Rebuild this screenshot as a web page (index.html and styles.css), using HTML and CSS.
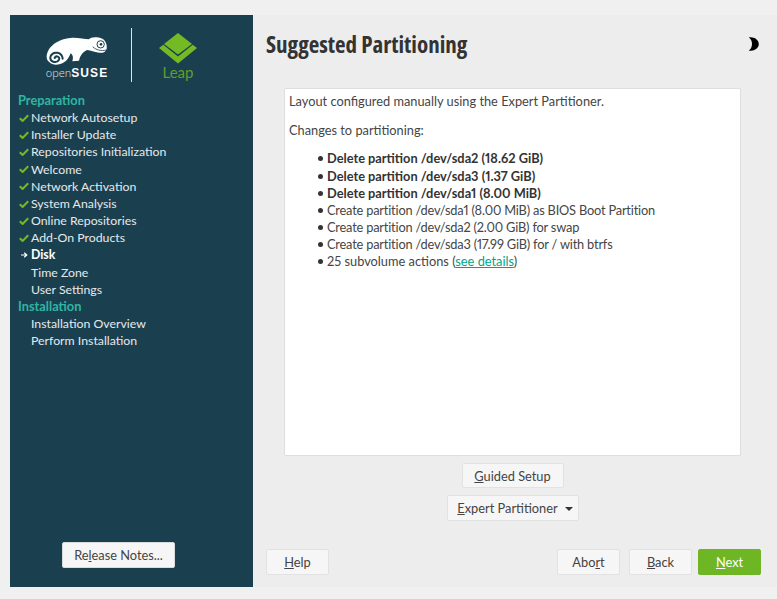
FILE: index.html
```html
<!DOCTYPE html>
<html lang="en">
<head>
<meta charset="utf-8">
<title>Suggested Partitioning</title>
<link rel="stylesheet" href="styles.css">
</head>
<body>
<div class="app">
  <aside class="sidebar">
    <div class="logos">
      <div class="brand">
        <svg class="geeko" viewBox="33 40 195 99" aria-hidden="true">
          <path fill="#fff" d="M38 110C38 80 70 55 110 52C130 50 150 56 165 56C170 48 190 48 205 54C215 60 220 72 218 84C216 94 205 98 195 96C180 94 170 90 160 88C150 92 140 100 135 120L115 122C118 112 118 104 110 98C105 110 100 120 90 125C80 132 60 135 50 128C42 122 38 118 38 110Z"/>
          <path fill="none" stroke="#1a4050" stroke-width="6" stroke-linecap="round" d="M86 114C84 94 58 90 50 106C44 124 68 130 75 117C79 108 66 103 62 112"/>
          <circle cx="200" cy="71" r="11" fill="none" stroke="#1a4050" stroke-width="3"/>
          <circle cx="201" cy="71" r="4" fill="#1a4050"/>
          <path fill="none" stroke="#1a4050" stroke-width="2.5" d="M176 78C186 88 202 92 216 88"/>
        </svg>
        <div class="wordmark"><span class="wm-open">open</span><span class="wm-suse">SUSE</span></div>
      </div>
      <div class="logo-rule"></div>
      <div class="brand brand-leap">
        <svg class="leap" viewBox="0 0 38 32" aria-hidden="true">
          <path fill="#73ba25" d="M19 0L33 11L19 21.500L5 11Z"/>
          <path fill="#73ba25" d="M0 15L4.300 11.700L19 23.500L33.700 11.700L38 15L19 30.500Z"/>
        </svg>
        <div class="leap-name">Leap</div>
      </div>
    </div>
    <div class="steps">
      <div class="section">Preparation</div>
      <div class="step"><span class="mark"><svg viewBox="0 0 10 8"><path d="M.8 4.200L3.600 7L9.200 1.200" fill="none" stroke="#73ba25" stroke-width="2"/></svg></span>Network Autosetup</div>
      <div class="step"><span class="mark"><svg viewBox="0 0 10 8"><path d="M.8 4.200L3.600 7L9.200 1.200" fill="none" stroke="#73ba25" stroke-width="2"/></svg></span>Installer Update</div>
      <div class="step"><span class="mark"><svg viewBox="0 0 10 8"><path d="M.8 4.200L3.600 7L9.200 1.200" fill="none" stroke="#73ba25" stroke-width="2"/></svg></span>Repositories Initialization</div>
      <div class="step"><span class="mark"><svg viewBox="0 0 10 8"><path d="M.8 4.200L3.600 7L9.200 1.200" fill="none" stroke="#73ba25" stroke-width="2"/></svg></span>Welcome</div>
      <div class="step"><span class="mark"><svg viewBox="0 0 10 8"><path d="M.8 4.200L3.600 7L9.200 1.200" fill="none" stroke="#73ba25" stroke-width="2"/></svg></span>Network Activation</div>
      <div class="step"><span class="mark"><svg viewBox="0 0 10 8"><path d="M.8 4.200L3.600 7L9.200 1.200" fill="none" stroke="#73ba25" stroke-width="2"/></svg></span>System Analysis</div>
      <div class="step"><span class="mark"><svg viewBox="0 0 10 8"><path d="M.8 4.200L3.600 7L9.200 1.200" fill="none" stroke="#73ba25" stroke-width="2"/></svg></span>Online Repositories</div>
      <div class="step"><span class="mark"><svg viewBox="0 0 10 8"><path d="M.8 4.200L3.600 7L9.200 1.200" fill="none" stroke="#73ba25" stroke-width="2"/></svg></span>Add-On Products</div>
      <div class="step current"><span class="mark"><svg viewBox="0 0 10 8"><path d="M2 4H7M5.200 1.800L7.800 4L5.200 6.200" fill="none" stroke="#fff" stroke-width="1.200"/></svg></span>Disk</div>
      <div class="step"><span class="mark"></span>Time Zone</div>
      <div class="step"><span class="mark"></span>User Settings</div>
      <div class="section">Installation</div>
      <div class="step"><span class="mark"></span>Installation Overview</div>
      <div class="step"><span class="mark"></span>Perform Installation</div>
    </div>
    <div class="sidebar-foot"><button class="btn btn-notes">Re<u>l</u>ease Notes...</button></div>
  </aside>
  <main class="main">
    <header class="head">
      <h1>Suggested Partitioning</h1>
      <svg class="moon" viewBox="0 0 11 14" aria-hidden="true"><path fill="#000" d="M.8 .3C6 -.5 10.800 2.500 10.800 7C10.800 11.500 6 14.500 .8 13.500C3 12 4 9.500 4 7C4 4.500 3 2 .8 .3Z"/></svg>
    </header>
    <section class="summary">
      <p>Layout configured manually using the Expert Partitioner.</p>
      <p>Changes to partitioning:</p>
      <ul>
        <li><b>Delete partition /dev/sda2 (18.62 GiB)</b></li>
        <li><b>Delete partition /dev/sda3 (1.37 GiB)</b></li>
        <li><b>Delete partition /dev/sda1 (8.00 MiB)</b></li>
        <li class="create">Create partition /dev/sda1 (8.00 MiB) as BIOS Boot Partition</li>
        <li class="create">Create partition /dev/sda2 (2.00 GiB) for swap</li>
        <li class="create">Create partition /dev/sda3 (17.99 GiB) for / with btrfs</li>
        <li>25 subvolume actions (<a href="#">see details</a>)</li>
      </ul>
    </section>
    <div class="actions">
      <button class="btn btn-guided"><u>G</u>uided Setup</button>
      <button class="btn btn-expert"><u>E</u>xpert Partitioner<span class="caret"></span></button>
    </div>
    <footer class="foot">
      <button class="btn btn-nav"><u>H</u>elp</button>
      <div class="spacer"></div>
      <button class="btn btn-nav">Abo<u>r</u>t</button>
      <button class="btn btn-nav btn-back"><u>B</u>ack</button>
      <button class="btn btn-nav btn-next"><u>N</u>ext</button>
    </footer>
  </main>
</div>
</body>
</html>
```
FILE: styles.css
```css
* { box-sizing: border-box; }
html, body { margin: 0; height: 100%; }
body {
  background: #f0f0f0;
  font-family: Lato, "Open Sans", sans-serif;
  font-size: 12.800px;
  font-variant-numeric: proportional-nums;
  color: #454545;
  overflow: hidden;
}
.app { display: flex; height: 572px; margin: 15px 0 0 10px; }
.sidebar {
  width: 243px;
  background: #1a4050;
  display: flex;
  flex-direction: column;
  color: #e6e9eb;
}
.logos { display: flex; height: 77px; padding: 13px 0 0 35px; }
.brand { width: 64px; display: flex; flex-direction: column; align-items: center; }
.geeko { width: 65px; height: 33px; margin-top: 5.500px; flex: none; }
.wordmark { color: #fff; font-family: "Open Sans", sans-serif; font-size: 11px; line-height: 12px; white-space: nowrap; margin-top: .500px; }
.wm-open { font-weight: 300; opacity: .85; }
.wm-suse { font-family: "Liberation Sans", sans-serif; font-weight: 700; font-size: 12px; letter-spacing: 1.100px; }
.logo-rule { width: 1px; height: 54px; background: #dfe4e6; margin-left: 22px; }
.brand-leap { width: 38px; margin-left: 27px; }
.leap { width: 38px; height: 32px; margin-top: 5px; flex: none; }
.leap-name { color: #5f9e28; font-size: 15px; line-height: 18px; margin-top: -2px; }
.steps { padding-left: 8px; font-size: 12.300px; }
.section, .step { height: 17.170px; line-height: 17.170px; white-space: nowrap; }
.section { color: #2fb5a3; font-weight: 700; font-size: 12.800px; }
.step { display: flex; align-items: center; }
.current { font-weight: 700; color: #fff; }
.mark { width: 13px; height: 17px; flex: none; display: flex; align-items: center; padding-left: 1px; }
.mark svg { width: 10px; height: 8px; }
.sidebar-foot { margin-top: auto; padding: 0 0 19px 52px; }
.main { width: 524px; height: 572px; background: #ededed; padding-left: 10px; display: flex; flex-direction: column; flex: none; }
.head { display: flex; justify-content: space-between; height: 73px; padding: 12px 18px 0 3px; }
h1 {
  margin: 0;
  font-family: "Open Sans", sans-serif;
  font-stretch: 75%;
  font-weight: 700;
  font-size: 23px;
  line-height: 34px;
  color: #333;
}
.moon { width: 11px; height: 14px; margin-top: 10px; }
.summary {
  width: 457px;
  height: 368px;
  margin-left: 21px;
  background: #fff;
  border: 1px solid #dedede;
  border-radius: 2px;
  padding: 4px 4px;
  line-height: 17.170px;
}
.summary p { margin: 0 0 11.500px; }
.summary ul { margin: 0; padding: 0 0 0 38px; list-style: none; }
.summary li { position: relative; }
.summary li::before { content: ""; position: absolute; left: -9px; top: 6px; width: 5px; height: 5px; border-radius: 50%; background: #333; }
.summary .create { letter-spacing: -.190px; }
.summary b { color: #333; }
.summary a { color: #00a489; }
.actions { display: flex; flex-direction: column; align-items: center; width: 457px; margin-left: 21px; gap: 7px; margin-top: 7px; }
.btn {
  font: inherit;
  color: #444;
  background: #f6f6f6;
  border: 1px solid #e2e2e2;
  border-radius: 2px;
  padding: 0;
  height: 26px;
}
.btn-guided { width: 102px; height: 25px; }
.btn-expert { width: 132px; padding-left: 5px; }
.caret { display: inline-block; margin-left: 7px; vertical-align: 2px; border: 4px solid transparent; border-top-color: #333; border-bottom: 0; }
.btn-notes { width: 113px; border-color: #d8dcde; }
.foot { display: flex; margin: 28px 16px 0 3px; }
.spacer { flex: 1; }
.btn-nav { width: 63px; }
.btn-back { margin-left: 9px; }
.btn-next { margin-left: 6px; background: #6eb624; border-color: #6eb624; color: #fff; }
```
